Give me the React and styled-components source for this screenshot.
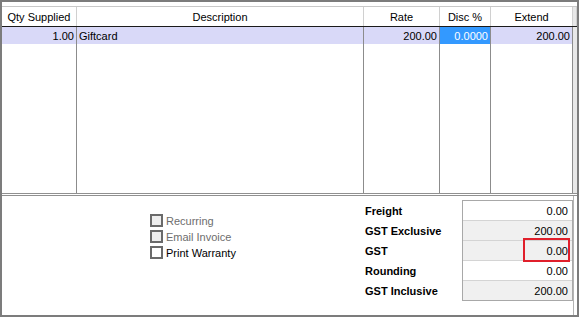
import React from "react";
import styled, { createGlobalStyle } from "styled-components";

const GlobalStyle = createGlobalStyle`
  html, body {
    margin: 0;
    padding: 0;
    background: #ffffff;
  }
  body {
    font-family: "Liberation Sans", Arial, sans-serif;
    font-size: 11px;
    color: #000000;
  }
`;

const Frame = styled.div`
  width: 579px;
  height: 317px;
  box-sizing: border-box;
  border: 2px solid #7c7c7c;
  display: flex;
  flex-direction: column;
  background: #ffffff;
`;

const GridArea = styled.div`
  margin-top: 4px;
  height: 187px;
  display: flex;
  flex-direction: column;
  border-top: 1px solid #c8c8c8;
  box-sizing: border-box;
`;

const COLS = "75px 287px 76px 51px 82px 4px";

const HeaderRow = styled.div`
  display: grid;
  grid-template-columns: ${COLS};
  height: 20px;
  box-sizing: border-box;
  border-bottom: 1px solid #1a1a1a;
`;

const HeaderCell = styled.div`
  display: flex;
  align-items: center;
  justify-content: center;
  border-right: 1px solid #d0d0d0;
  background: ${(p) => (p.$gutter ? "#e8e8e8" : "#ffffff")};
`;

const Body = styled.div`
  flex: 1;
  display: grid;
  grid-template-columns: ${COLS};
`;

const Column = styled.div`
  border-right: ${(p) => (p.$gutter ? "none" : "1px solid #8c8c8c")};
  background: ${(p) => (p.$gutter ? "#e8e8e8" : "#ffffff")};
`;

const Cell = styled.div`
  height: 17px;
  display: flex;
  align-items: center;
  justify-content: ${(p) => (p.$right ? "flex-end" : "flex-start")};
  padding: 0 2px;
  background: ${(p) => (p.$active ? "#3399ff" : "#d9d9f8")};
  color: ${(p) => (p.$active ? "#ffffff" : "#000000")};
`;

const Splitter = styled.div`
  height: 3px;
  box-sizing: border-box;
  border-top: 1px solid #909090;
  border-bottom: 1px solid #909090;
`;

const BottomPanel = styled.div`
  flex: 1;
  width: 572px;
  box-sizing: border-box;
  border-right: 1px solid #b4b4b4;
  display: grid;
  grid-template-columns: 148px 215px 97px 111px;
  align-items: start;
`;

const CheckGroup = styled.div`
  grid-column: 2;
  padding-top: 18px;
  display: flex;
  flex-direction: column;
`;

const CheckRow = styled.label`
  height: 16px;
  display: flex;
  align-items: flex-start;
  gap: 3px;
  color: ${(p) => (p.$disabled ? "#6d6d6d" : "#000000")};
`;

const Box = styled.span`
  width: 13px;
  height: 13px;
  box-sizing: border-box;
  border: 2px solid #6a6a6a;
  background: ${(p) => (p.$disabled ? "#eeeeee" : "#ffffff")};
`;

const CheckText = styled.span`
  line-height: 13px;
  margin-top: 1px;
`;

const Labels = styled.div`
  grid-column: 3;
  padding-top: 4px;
  display: flex;
  flex-direction: column;
`;

const Label = styled.div`
  height: 20px;
  padding-top: 1px;
  box-sizing: border-box;
  display: flex;
  align-items: center;
  font-weight: bold;
`;

const Values = styled.div`
  grid-column: 4;
  margin-top: 4px;
  border: 1px solid #a8a8a8;
  display: flex;
  flex-direction: column;
`;

const Value = styled.div`
  position: relative;
  height: 19px;
  display: flex;
  align-items: center;
  justify-content: flex-end;
  padding-right: 4px;
  background: ${(p) => (p.$readonly ? "#f0f0f0" : "#ffffff")};
  & + & {
    border-top: 1px solid #d4d4d4;
  }
`;

const Highlight = styled.span`
  position: absolute;
  z-index: 2;
  left: 60px;
  top: -3px;
  width: 47px;
  height: 24px;
  box-sizing: border-box;
  border: 2px solid #e01f2b;
`;

const columns = [
  { title: "Qty Supplied", value: "1.00", right: true },
  { title: "Description", value: "Giftcard" },
  { title: "Rate", value: "200.00", right: true },
  { title: "Disc %", value: "0.0000", right: true, active: true },
  { title: "Extend", value: "200.00", right: true },
];

const totals = [
  { label: "Freight", value: "0.00" },
  { label: "GST Exclusive", value: "200.00", readonly: true },
  { label: "GST", value: "0.00", readonly: true, mark: true },
  { label: "Rounding", value: "0.00" },
  { label: "GST Inclusive", value: "200.00", readonly: true },
];

const options = [
  { label: "Recurring", disabled: true },
  { label: "Email Invoice", disabled: true },
  { label: "Print Warranty" },
];

export default function App() {
  return (
    <>
      <GlobalStyle />
      <Frame>
        <GridArea>
          <HeaderRow>
            {columns.map((c) => (
              <HeaderCell key={c.title}>{c.title}</HeaderCell>
            ))}
            <HeaderCell $gutter />
          </HeaderRow>
          <Body>
            {columns.map((c) => (
              <Column key={c.title}>
                <Cell $right={c.right} $active={c.active}>
                  {c.value}
                </Cell>
              </Column>
            ))}
            <Column $gutter />
          </Body>
        </GridArea>
        <Splitter />
        <BottomPanel>
          <CheckGroup>
            {options.map((o) => (
              <CheckRow key={o.label} $disabled={o.disabled}>
                <Box $disabled={o.disabled} />
                <CheckText>{o.label}</CheckText>
              </CheckRow>
            ))}
          </CheckGroup>
          <Labels>
            {totals.map((t) => (
              <Label key={t.label}>{t.label}</Label>
            ))}
          </Labels>
          <Values>
            {totals.map((t) => (
              <Value key={t.label} $readonly={t.readonly}>
                {t.value}
                {t.mark && <Highlight />}
              </Value>
            ))}
          </Values>
        </BottomPanel>
      </Frame>
    </>
  );
}
